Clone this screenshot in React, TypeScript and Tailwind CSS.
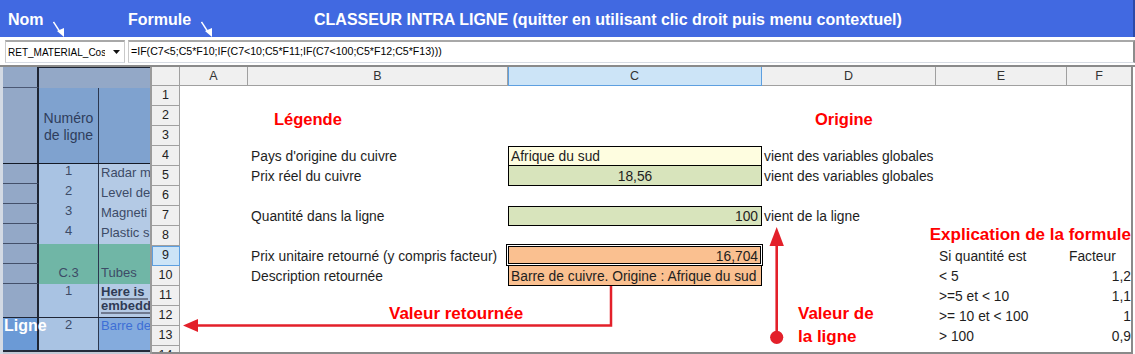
import React from 'react'

const RED = '#e3202a'

function TopArrow({ className }: { className: string }) {
  return (
    <svg width="12" height="17" viewBox="0 0 12 17" className={className}>
      <line x1="0.5" y1="1" x2="7" y2="11" stroke="white" strokeWidth="1.4" />
      <polygon points="4,10 11,7 11,16" fill="white" />
    </svg>
  )
}

const colHeaders = [
  { label: '', w: 'w-[28px]', active: false },
  { label: 'A', w: 'w-[68px]', active: false },
  { label: 'B', w: 'w-[260px]', active: false },
  { label: 'C', w: 'w-[254px]', active: true },
  { label: 'D', w: 'w-[174px]', active: false },
  { label: 'E', w: 'w-[131px]', active: false },
  { label: 'F', w: 'w-[64px]', active: false },
]

const rowNums = [1, 2, 3, 4, 5, 6, 7, 8, 9, 10, 11, 12, 13, 14]

// only the part of each label that shows before the panel edge
const blueRows = [
  { n: '1', t: 'Radar m' },
  { n: '2', t: 'Level de' },
  { n: '3', t: 'Magneti' },
  { n: '4', t: 'Plastic s' },
]

function LeftPanel() {
  // the calling workbook, seen behind the in-line sheet
  return (
    <div className="flex h-[287px] w-[150px] flex-col overflow-hidden border-l-[3px] border-[#d3dae4] bg-[#c2cad6] text-[13px] text-[#3d4b67]">
      <div className="flex h-[21px]">
        <div className="w-[36px] border-b border-r-2 border-b-[#4b5874] border-r-[#1e2533] bg-[#93a8c7]" />
        <div className="flex-1 border-t border-[#1c2433] bg-[#93a8c7]" />
      </div>
      <div className="flex h-[76px] border-b border-[#141a26]">
        <div className="w-[36px] border-r-2 border-r-[#1e2533] bg-[#93a8c7]" />
        <div className="flex w-[60px] flex-col items-center justify-center border-r border-r-[#2c3850] bg-[#7fa2cf] pt-[2px] text-[14px] leading-[17px] text-[#2e3d5c]">
          <span>Numéro</span>
          <span>de ligne</span>
        </div>
        <div className="flex-1 bg-[#7fa2cf]" />
      </div>
      {blueRows.map((r) => (
        <div key={r.n} className="flex h-[20px]">
          <div className="w-[36px] border-b border-r-2 border-b-[#44506a] border-r-[#1e2533] bg-[#93a8c7]" />
          <div className="w-[60px] border-r border-r-[#2c3850] bg-[#a9c3e3] text-center leading-[14px]">{r.n}</div>
          <div className="flex-1 overflow-hidden whitespace-nowrap bg-[#b4cae5] pl-[2px] leading-[17px]">{r.t}</div>
        </div>
      ))}
      <div className="flex h-[20px]">
        <div className="w-[36px] border-b border-r-2 border-b-[#44506a] border-r-[#1e2533] bg-[#93a8c7]" />
        <div className="w-[60px] border-r border-r-[#2c3850] bg-[#70b6a6]" />
        <div className="flex-1 bg-[#70b6a6]" />
      </div>
      <div className="flex h-[20px]">
        <div className="w-[36px] border-b border-r-2 border-b-[#44506a] border-r-[#1e2533] bg-[#93a8c7]" />
        <div className="w-[60px] border-r border-r-[#2c3850] bg-[#70b6a6] text-center leading-[17px]">C.3</div>
        <div className="flex-1 overflow-hidden whitespace-nowrap bg-[#70b6a6] pl-[2px] leading-[17px]">Tubes</div>
      </div>
      <div className="flex h-[34px] border-b border-[#1f2636]">
        <div className="w-[36px] border-r-2 border-r-[#1e2533] bg-[#93a8c7]" />
        <div className="w-[60px] border-r border-r-[#2c3850] bg-[#a9c3e3] text-center leading-[14px]">1</div>
        <div className="flex flex-1 flex-col overflow-hidden whitespace-nowrap bg-[#b4cae5] pl-[2px] pt-[1px] font-bold leading-[14px] text-[#2f3b55] underline decoration-[#6f7a90] decoration-2 underline-offset-[2px]">
          <span>Here is&nbsp;</span>
          <span>embedd</span>
        </div>
      </div>
      <div className="flex h-[32px]">
        <div className="relative z-10 w-[36px] border-r-2 border-r-[#1e2533] bg-[#6b9ad6] pl-[1px] text-[16px] font-bold leading-[16px] text-white">
          Ligne
        </div>
        <div className="w-[60px] border-r border-r-[#2c3850] bg-[#a9c3e3] text-center leading-[13px]">2</div>
        <div className="flex-1 overflow-hidden whitespace-nowrap bg-[#84abdd] pl-[2px] leading-[15px] text-[#3d6fd6]">Barre de</div>
      </div>
      <div className="h-[2px] bg-[#232b3a]" />
    </div>
  )
}

function Sheet() {
  return (
    <div className="flex h-[287px] w-[983px] flex-col border-x-2 border-l-[#9b9b9b] border-r-[#8a8a8a]">
      <div className="h-[285px] overflow-hidden">
        <div className="flex h-[19px] text-[12.5px] text-[#333]">
          {colHeaders.map((c, i) => (
            <div
              key={i}
              className={
                c.active
                  ? `${c.w} flex items-center justify-center border-b border-r border-[#5d9fe0] bg-[#cce4f7] shadow-[inset_1px_0_0_#5d9fe0]`
                  : i === colHeaders.length - 1
                    ? `${c.w} flex items-center justify-center border-b border-[#a0a0a0] bg-[#f0f0f0]`
                    : `${c.w} flex items-center justify-center border-b border-r border-[#a0a0a0] bg-[#f0f0f0]`
              }
            >
              {c.label}
            </div>
          ))}
        </div>
        <div className="flex">
          <div className="flex w-[28px] flex-col text-[12.5px] text-[#222]">
            {rowNums.map((n) => (
              <div
                key={n}
                className={
                  n === 9
                    ? 'h-[20px] border-b border-r border-[#5d9fe0] bg-[#cce4f7] text-center leading-[19px] shadow-[inset_1px_1px_0_#5d9fe0]'
                    : 'h-[20px] border-b border-r border-[#a0a0a0] bg-[#f0f0f0] text-center leading-[19px]'
                }
              >
                {n}
              </div>
            ))}
          </div>
          <div className="grid flex-1 grid-cols-[68px_260px_254px_174px_131px_64px] grid-rows-[repeat(14,20px)] whitespace-nowrap text-[13.8px] text-[#1e1e1e]">
            <div className="col-start-2 row-start-2 pl-[26px] text-[16.5px] font-bold leading-[27px] text-[#ff0000]">Légende</div>
            <div className="col-start-4 row-start-2 pl-[53px] text-[16.5px] font-bold leading-[27px] text-[#ff0000]">Origine</div>

            <div className="col-start-2 row-start-4 pl-[3px] leading-[22px]">Pays d'origine du cuivre</div>
            <div className="col-start-3 row-start-4 border border-black bg-[#fefde0] pl-[2px] leading-[20px]">Afrique du sud</div>
            <div className="col-start-4 row-start-4 pl-[2px] leading-[22px]">vient des variables globales</div>

            <div className="col-start-2 row-start-5 pl-[3px] leading-[22px]">Prix réel du cuivre</div>
            <div className="col-start-3 row-start-5 border-x border-b border-black bg-[#d8e4bc] text-center leading-[22px]">18,56</div>
            <div className="col-start-4 row-start-5 pl-[2px] leading-[22px]">vient des variables globales</div>

            <div className="col-start-2 row-start-7 pl-[3px] leading-[22px]">Quantité dans la ligne</div>
            <div className="col-start-3 row-start-7 border border-black bg-[#d8e4bc] pr-[3px] text-right leading-[20px]">100</div>
            <div className="col-start-4 row-start-7 pl-[2px] leading-[22px]">vient de la ligne</div>

            <div className="col-start-4 col-span-3 row-start-8 text-right text-[17px] font-bold leading-[17px] text-[#ff0000]">
              Explication de la formule
            </div>

            <div className="col-start-2 row-start-9 pl-[3px] leading-[22px]">Prix unitaire retourné (y compris facteur)</div>
            <div className="col-start-3 row-start-9 -mt-[2px] -ml-[2px] -mr-[1px] border border-black bg-white p-px">
              <div className="h-full border border-black bg-[#fac090] pr-[2px] text-right leading-[20px]">16,704</div>
            </div>
            <div className="col-start-5 row-start-9 pl-[3px] leading-[22px]">Si quantité est</div>
            <div className="col-start-6 row-start-9 pl-[2px] leading-[22px]">Facteur</div>

            <div className="col-start-2 row-start-10 pl-[3px] leading-[22px]">Description retournée</div>
            <div className="col-start-3 row-start-10 border-x border-b border-black bg-[#fac090] pl-[2px] leading-[22px]">
              Barre de cuivre. Origine : Afrique du sud
            </div>
            <div className="col-start-5 row-start-10 pl-[3px] leading-[22px]">{'< 5'}</div>
            <div className="col-start-6 row-start-10 text-right leading-[22px]">1,2</div>

            <div className="col-start-5 row-start-11 pl-[3px] leading-[22px]">{'>=5 et < 10'}</div>
            <div className="col-start-6 row-start-11 text-right leading-[22px]">1,1</div>

            <div className="col-start-2 col-span-2 row-start-12 pl-[141px] text-[17px] font-bold leading-[15px] text-[#ff0000]">
              Valeur retournée
            </div>
            <div className="col-start-4 row-start-12 row-span-2 -mt-[4px] flex flex-col pl-[36px] text-[17px] font-bold leading-[23px] text-[#ff0000]">
              <span>Valeur de</span>
              <span>la ligne</span>
            </div>
            <div className="col-start-5 row-start-12 pl-[3px] leading-[22px]">{'>= 10 et < 100'}</div>
            <div className="col-start-6 row-start-12 text-right leading-[22px]">1</div>

            <div className="col-start-5 row-start-13 pl-[3px] leading-[22px]">{'> 100'}</div>
            <div className="col-start-6 row-start-13 text-right leading-[22px]">0,9</div>
          </div>
        </div>
      </div>
      <div className="h-[2px] bg-[#8a8a8a]" />
    </div>
  )
}

export default function App() {
  return (
    <div className="relative h-[354px] w-[1135px] overflow-hidden bg-white font-['Liberation_Sans',Arial,sans-serif] text-[#1e1e1e]">
      <div className="flex h-[37px] bg-[#4169e1] text-[16px] font-bold leading-[16px] text-white">
        <div className="flex w-[128px] items-start pl-[8px] pt-[12px]">
          <span>Nom</span>
          <TopArrow className="ml-[9px] mt-[9px]" />
        </div>
        <div className="flex w-[186px] items-start pt-[12px]">
          <span>Formule</span>
          <TopArrow className="ml-[10px] mt-[9px]" />
        </div>
        <div className="flex-1 whitespace-nowrap pt-[12px]">
          CLASSEUR INTRA LIGNE (quitter en utilisant clic droit puis menu contextuel)
        </div>
        <div className="w-[2px] bg-[#2c4aa8]" />
      </div>

      <div className="flex h-[28px] gap-[3px] pl-[5px] pt-[3px]">
        <div className="flex h-[23px] w-[120px] items-center border-x border-b-[1px] border-t-2 border-x-[#c9c9c9] border-b-[#d6dbe3] border-t-[#a8a8a8] pl-[2px]">
          <span className="w-[97px] overflow-hidden whitespace-nowrap text-[10px] text-black">RET_MATERIAL_Cos</span>
          <svg width="7" height="4" viewBox="0 0 7 4" className="ml-[8px]">
            <polygon points="0,0 7,0 3.5,4" fill="#111" />
          </svg>
        </div>
        <div className="flex h-[23px] flex-1 items-center border-b border-l border-r-2 border-t-2 border-b-[#d6dbe3] border-l-[#c9c9c9] border-r-[#8c8c8c] border-t-[#a8a8a8] pl-[2px] text-[10.6px] text-black">
          =IF(C7&lt;5;C5*F10;IF(C7&lt;10;C5*F11;IF(C7&lt;100;C5*F12;C5*F13)))
        </div>
      </div>

      <div className="h-[2px] bg-[#8a8a8a]" />

      <div className="flex">
        <LeftPanel />
        <Sheet />
      </div>

      {/* annotation arrows drawn over the sheet */}
      <svg className="pointer-events-none absolute left-0 top-0" width="1135" height="354" viewBox="0 0 1135 354">
        <path d="M611 286 V325.5 H196" fill="none" stroke={RED} strokeWidth="2.5" />
        <polygon points="183,325.5 198,319 198,332" fill={RED} />
        <line x1="776.7" y1="337" x2="776.7" y2="243" stroke={RED} strokeWidth="2.6" />
        <polygon points="776.7,227 769.5,246 783.9,246" fill={RED} />
        <circle cx="776.7" cy="337.3" r="6.6" fill={RED} />
      </svg>
    </div>
  )
}
